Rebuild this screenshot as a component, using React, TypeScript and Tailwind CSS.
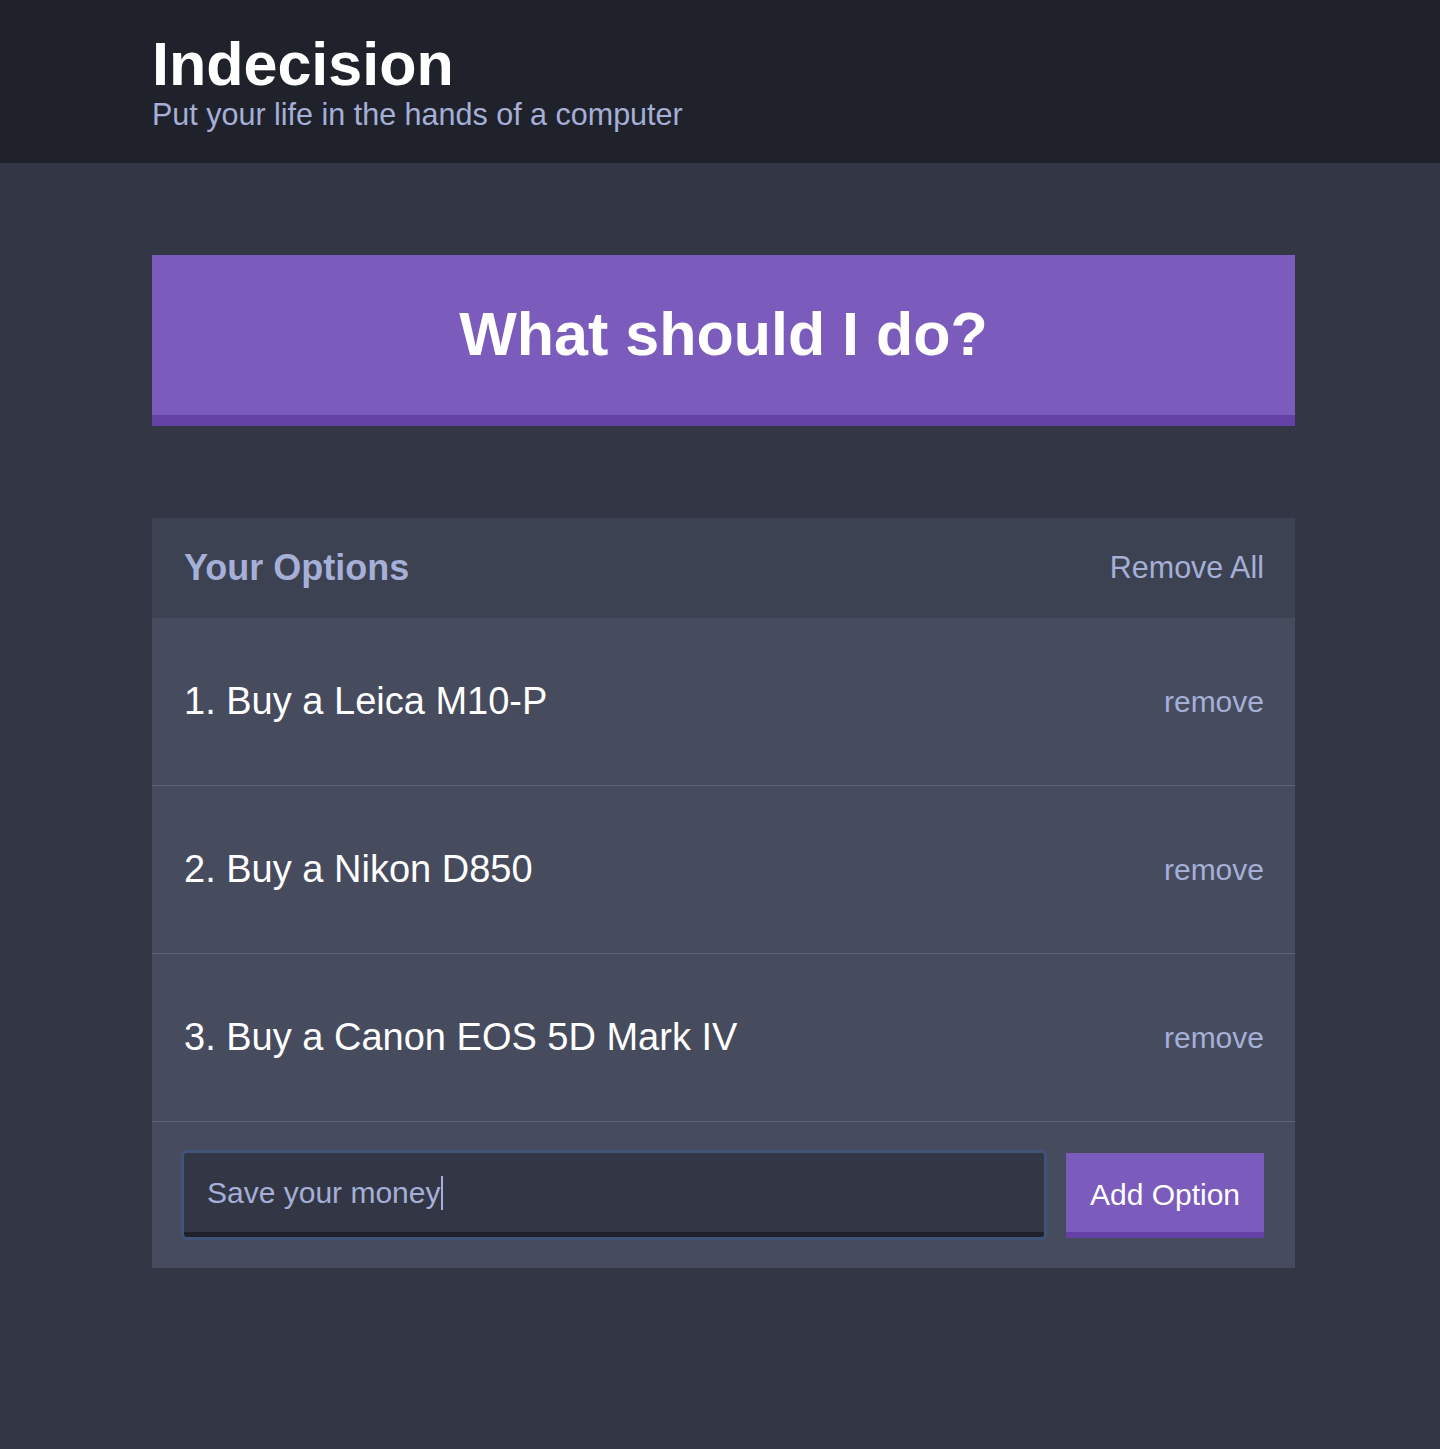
const options = ["Buy a Leica M10-P", "Buy a Nikon D850", "Buy a Canon EOS 5D Mark IV"];

export default function App() {
  return (
    <div className="min-h-[1449px] bg-[#333745] font-['Liberation_Sans',Arial,sans-serif]">
      <header className="h-[163px] bg-[#20222b] pt-[30px]">
        <div className="ml-[152px] w-[1143px]">
          <h1 className="text-[61px] font-bold leading-[68px] text-white">Indecision</h1>
          <h2 className="mt-[-2px] text-[30.5px] leading-[36px] text-[#a5afd7]">Put your life in the hands of a computer</h2>
        </div>
      </header>

      <main className="ml-[152px] w-[1143px] pt-[92px]">
        <button className="h-[171px] w-full border-b-[11px] border-[#6441a5] bg-[#7b5bbc] text-[61px] font-bold text-white">
          What should I do?
        </button>

        <div className="mt-[92px] bg-[#464b5e]">
          <div className="flex h-[100px] items-center justify-between bg-[#3c4251] pl-[32px] pr-[31px]">
            <h3 className="text-[36px] font-bold text-[#a5afd7]">Your Options</h3>
            <button className="text-[30.5px] text-[#a5afd7]">Remove All</button>
          </div>

          {options.map((opt, i) => (
            <div
              key={opt}
              className="flex h-[168px] items-center justify-between border-b border-[#5d6279] pl-[32px] pr-[31px]"
            >
              <p className="text-[38px] text-white">
                {i + 1}. {opt}
              </p>
              <button className="text-[30px] text-[#a5afd7]">remove</button>
            </div>
          ))}

          <form className="flex items-start gap-[22px] pb-[30px] pl-[32px] pr-[31px] pt-[31px]" onSubmit={(e) => e.preventDefault()}>
            <div className="flex h-[84px] flex-1 items-center border-b-[5px] border-[#20222b] bg-[#333745] pl-[23px] text-[30px] text-[#a5afd7] outline outline-[3px] outline-[#42537a] rounded-[2px]">
              <span>Save your money</span>
              <span className="ml-[1px] h-[34px] w-[1.5px] bg-[#a5afd7]" />
            </div>
            <button className="h-[85px] w-[198px] border-b-[6px] border-[#6441a5] bg-[#7b5bbc] pt-[4px] text-[30px] text-white">
              Add Option
            </button>
          </form>
        </div>
      </main>
    </div>
  );
}
